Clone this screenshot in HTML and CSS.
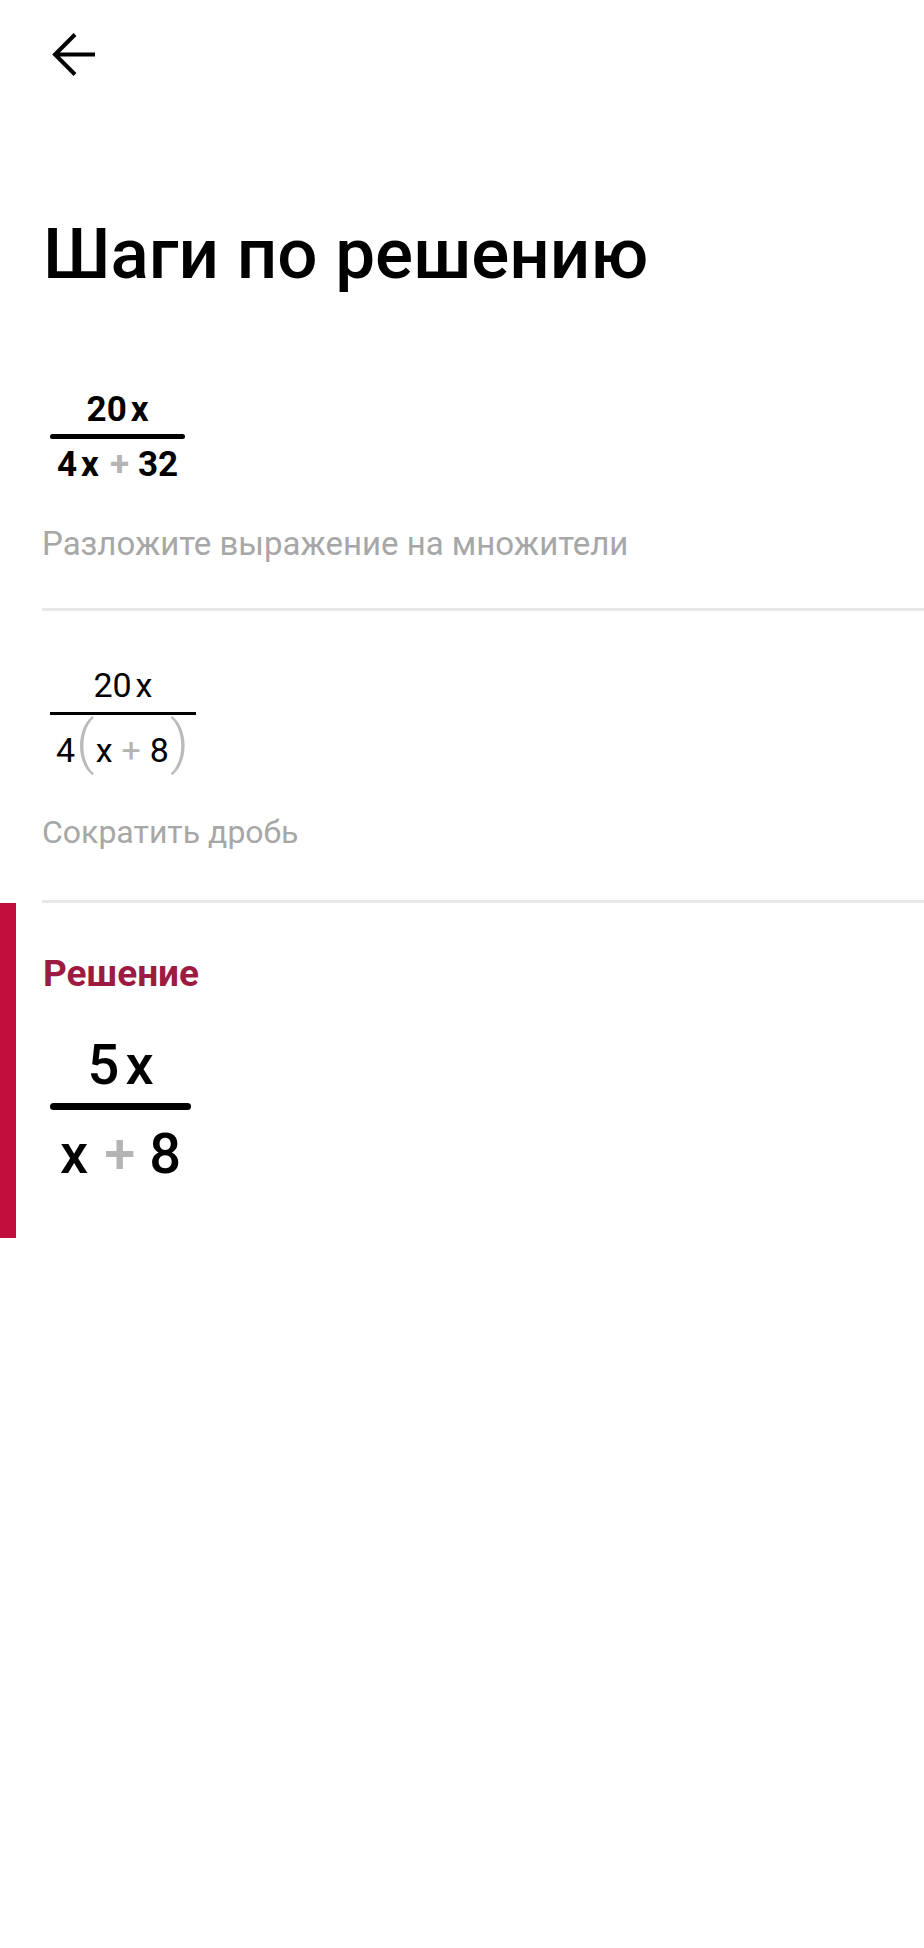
FILE: index.html
```html
<!DOCTYPE html>
<html lang="ru">
<head>
<meta charset="utf-8">
<title>Шаги по решению</title>
<link rel="stylesheet" href="styles.css">
</head>
<body>
<header class="top">
  <button class="back" aria-label="Назад">
    <svg width="48" height="50" viewBox="0 0 48 50" aria-hidden="true">
      <path d="M5 24.5 H45 M25 4.5 L5 24.5 L25 44.5" fill="none" stroke="#000" stroke-width="4"/>
    </svg>
  </button>
</header>
<main>
  <h1 class="title">Шаги по решению</h1>

  <section class="step step-first">
    <div class="frac frac-bold">
      <div class="row num"><span>20</span><span class="v">x</span></div>
      <div class="bar"></div>
      <div class="row den"><span>4</span><span class="v">x</span><span class="op">+</span><span>32</span></div>
    </div>
    <p class="desc">Разложите выражение на множители</p>
  </section>

  <section class="step step-second">
    <div class="frac frac-reg">
      <div class="row num"><span>20</span><span class="v">x</span></div>
      <div class="bar"></div>
      <div class="row den"><span>4</span><span class="paren">(</span><span class="v">x</span><span class="op">+</span><span>8</span><span class="paren">)</span></div>
    </div>
    <p class="desc">Сократить дробь</p>
  </section>

  <section class="solution">
    <h2 class="sol-title">Решение</h2>
    <div class="frac frac-big">
      <div class="row num"><span>5</span><span class="v">x</span></div>
      <div class="bar"></div>
      <div class="row den"><span>x</span><span class="op">+</span><span>8</span></div>
    </div>
  </section>
</main>
</body>
</html>
```

FILE: styles.css
```css
* { box-sizing: border-box; }

html, body {
  margin: 0;
  padding: 0;
  background: #fff;
  color: #000;
  font-family: Roboto, "Noto Sans", sans-serif;
}

.top {
  padding: 30px 0 0 50px;
  height: 80px;
}

.back {
  display: block;
  padding: 0;
  margin: 0;
  border: 0;
  background: none;
  width: 48px;
  height: 50px;
}

.back svg { display: block; }

.title {
  margin: 138px 0 0 43px;
  font-size: 71px;
  line-height: 1;
  font-weight: 500;
  letter-spacing: 0;
}

.step {
  margin-left: 42px;
  border-bottom: 3px solid #e8e8e8;
}

.step-first { padding-top: 103px; padding-bottom: 48px; }
.step-second { padding-top: 57px; padding-bottom: 52px; }

.desc {
  margin: 0;
  font-size: 33px;
  line-height: 1;
  color: #a7a7a7;
}

.step-first .desc { margin-top: 45px; }
.step-second .desc { margin-top: 45px; font-size: 32px; }

/* fractions */
.frac {
  display: inline-flex;
  flex-direction: column;
  align-items: center;
  margin-left: 8px;
  font-family: Roboto, "Liberation Sans", sans-serif;
  color: #000;
}

.row {
  display: flex;
  align-items: center;
  line-height: 1;
  white-space: nowrap;
}

.bar {
  align-self: stretch;
  background: #000;
}

.op { color: #b4b4b4; }

.frac-bold { font-size: 35px; font-weight: 700; }
.frac-bold .num .v { margin-left: 4px; }
.frac-bold .bar { height: 5px; border-radius: 3px; margin: 7px 0 8px; }
.frac-bold .den { padding: 0 7px; }
.frac-bold .den .v { margin-left: 4px; }
.frac-bold .den .op { margin: 0 9px 0 11px; }

.frac-reg { font-size: 34px; font-weight: 400; }
.frac-reg .num .v { margin-left: 4px; }
.frac-reg .bar { height: 3px; margin: 10px 0 -2px; }
.frac-reg .den { padding: 0 6px; align-items: baseline; }
.frac-reg .paren {
  font-size: 58px;
  font-weight: 300;
  color: #bbbbbb;
  margin: 0 1px;
}
.frac-reg .den .op { margin: 0 9px; }

.solution {
  border-left: 16px solid #c10f3d;
  padding: 52px 0 56px 27px;
}

.sol-title {
  margin: 0;
  font-size: 37px;
  line-height: 1;
  font-weight: 700;
  color: #9d1b41;
}

.frac-big {
  margin-top: 45px;
  margin-left: 7px;
  font-size: 56px;
  font-weight: 500;
}
.frac-big .num .v { margin-left: 6px; }
.frac-big .bar { height: 7px; border-radius: 4px; margin: 10px 0 16px; }
.frac-big .den { padding: 0 10px; }
.frac-big .den .op { margin: 0 14px 0 16px; font-weight: 500; }
```
